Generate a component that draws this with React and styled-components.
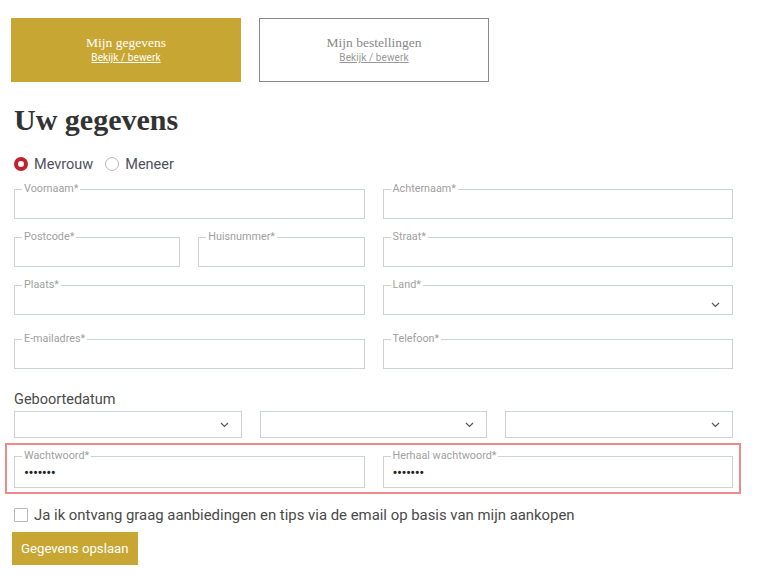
import React from 'react';
import styled, { createGlobalStyle } from 'styled-components';

const GOLD = '#c8a634';
const SANS = `Roboto, "Liberation Sans", Arial, sans-serif`;
const SERIF = `"Liberation Serif", "Times New Roman", serif`;

const GlobalStyle = createGlobalStyle`
  html, body {
    margin: 0;
    padding: 0;
    background: #ffffff;
  }
  body {
    font-family: ${SANS};
    color: #555;
  }
  * {
    box-sizing: border-box;
  }
`;

const Page = styled.div`
  width: 759px;
  padding: 18px 26px 12px 14px;
`;

const Tabs = styled.div`
  display: flex;
  gap: 18px;
  margin-left: -3px;
`;

const Tab = styled.div`
  width: 230px;
  height: 64px;
  display: flex;
  flex-direction: column;
  align-items: center;
  justify-content: center;
  background: ${({ active }) => (active ? GOLD : '#fff')};
  border: 1px solid ${({ active }) => (active ? GOLD : '#8a8a8a')};
  color: ${({ active }) => (active ? '#fff' : '#888')};
  cursor: pointer;
`;

const TabTitle = styled.div`
  font-family: ${SERIF};
  font-size: 13.5px;
  line-height: 16px;
`;

const TabLink = styled.a`
  font-family: ${SANS};
  font-size: 10px;
  line-height: 14px;
  letter-spacing: 0.1px;
  text-decoration: underline;
  color: ${({ active }) => (active ? '#fff' : '#999')};
`;

const Heading = styled.h1`
  font-family: ${SERIF};
  font-weight: bold;
  font-size: 30px;
  line-height: 36px;
  color: #333;
  margin: 20px 0 16px;
`;

const RadioRow = styled.div`
  display: flex;
  align-items: center;
  gap: 12px;
  height: 20px;
  font-size: 14.5px;
  color: #4f5060;
`;

const RadioLabel = styled.label`
  display: flex;
  align-items: center;
  gap: 6px;
  cursor: pointer;
`;

const RadioDot = styled.span`
  width: 14px;
  height: 14px;
  border-radius: 50%;
  border: ${({ checked }) => (checked ? '4px solid #c4202e' : '1px solid #b8b8b8')};
  background: #fff;
  flex-shrink: 0;
`;

const Grid = styled.div`
  display: grid;
  grid-template-columns: ${({ cols }) => cols || '1fr 1fr'};
  column-gap: 18px;
  margin-top: ${({ top }) => top ?? 12}px;
`;

const SubGrid = styled.div`
  display: grid;
  grid-template-columns: 1fr 1fr;
  column-gap: 18px;
`;

const Field = styled.fieldset`
  position: relative;
  margin: 0;
  padding: 0 7px;
  border: 1px solid #cdd2d9;
  min-width: 0;
`;

const Legend = styled.legend`
  padding: 0 2px;
  margin-left: 0;
  font-size: 10.8px;
  line-height: 12px;
  color: #a0a0a0;
  font-family: ${SANS};
`;

const Input = styled.input`
  display: block;
  width: 100%;
  height: ${({ tall }) => (tall ? 25 : 23)}px;
  border: none;
  outline: none;
  padding: 0 0 4px 2px;
  font-family: ${SANS};
  font-size: ${({ type }) => (type === 'password' ? 15 : 13)}px;
  color: #222;
  background: transparent;
  letter-spacing: ${({ type }) => (type === 'password' ? '-0.6px' : '0')};
`;

const Chevron = styled.svg`
  position: absolute;
  right: 12px;
  top: ${({ top }) => top}px;
  width: 9px;
  height: 6px;
`;

const DateLabel = styled.div`
  margin-top: 22px;
  font-size: 14.5px;
  line-height: 18px;
  color: #4a4a4a;
`;

const SelectBox = styled.div`
  position: relative;
  height: 27px;
  border: 1px solid #cdd2d9;
`;

const PasswordBox = styled.div`
  margin: 5px -8px 0 -9px;
  border: 2px solid #f08a8a;
  padding: 5px 6px 4px 7px;
  display: grid;
  grid-template-columns: 1fr 1fr;
  column-gap: 18px;
`;

const CheckRow = styled.label`
  display: flex;
  align-items: center;
  gap: 6px;
  margin-top: 13px;
  height: 16px;
  font-size: 14.9px;
  color: #4a4a4a;
`;

const CheckBox = styled.span`
  width: 14px;
  height: 14px;
  border: 1px solid #b8b8b8;
  border-radius: 1px;
  flex-shrink: 0;
`;

const SaveButton = styled.button`
  margin: 9px 0 0 -2px;
  height: 33px;
  padding: 0 9px;
  background: ${GOLD};
  border: none;
  color: #fff;
  font-family: ${SANS};
  font-size: 13.2px;
  cursor: pointer;
`;

const ChevronIcon = ({ top }) => (
  <Chevron top={top} viewBox="0 0 9 6">
    <path d="M1 1 L4.5 4.5 L8 1" fill="none" stroke="#555" strokeWidth="1.2" />
  </Chevron>
);

const TextField = ({ label, select, tall, type, value }) => (
  <Field>
    <Legend>{label}</Legend>
    <Input tall={tall} type={type || 'text'} defaultValue={value} readOnly={!!value} />
    {select && <ChevronIcon top={11} />}
  </Field>
);

const Select = () => (
  <SelectBox>
    <ChevronIcon top={10} />
  </SelectBox>
);

export default function App() {
  return (
    <Page>
      <GlobalStyle />
      <Tabs>
        <Tab active>
          <TabTitle>Mijn gegevens</TabTitle>
          <TabLink active>Bekijk / bewerk</TabLink>
        </Tab>
        <Tab>
          <TabTitle>Mijn bestellingen</TabTitle>
          <TabLink>Bekijk / bewerk</TabLink>
        </Tab>
      </Tabs>

      <Heading>Uw gegevens</Heading>

      <RadioRow>
        <RadioLabel>
          <RadioDot checked />
          Mevrouw
        </RadioLabel>
        <RadioLabel>
          <RadioDot />
          Meneer
        </RadioLabel>
      </RadioRow>

      <Grid top={9}>
        <TextField label="Voornaam*" />
        <TextField label="Achternaam*" />
      </Grid>
      <Grid>
        <SubGrid>
          <TextField label="Postcode*" />
          <TextField label="Huisnummer*" />
        </SubGrid>
        <TextField label="Straat*" />
      </Grid>
      <Grid>
        <TextField label="Plaats*" />
        <TextField label="Land*" select />
      </Grid>
      <Grid top={18}>
        <TextField label="E-mailadres*" />
        <TextField label="Telefoon*" />
      </Grid>

      <DateLabel>Geboortedatum</DateLabel>
      <Grid cols="1fr 1fr 1fr" top={2}>
        <Select />
        <Select />
        <Select />
      </Grid>

      <PasswordBox>
        <TextField label="Wachtwoord*" type="password" value="geheim1" tall />
        <TextField label="Herhaal wachtwoord*" type="password" value="geheim1" tall />
      </PasswordBox>

      <CheckRow>
        <CheckBox />
        Ja ik ontvang graag aanbiedingen en tips via de email op basis van mijn aankopen
      </CheckRow>

      <SaveButton>Gegevens opslaan</SaveButton>
    </Page>
  );
}
